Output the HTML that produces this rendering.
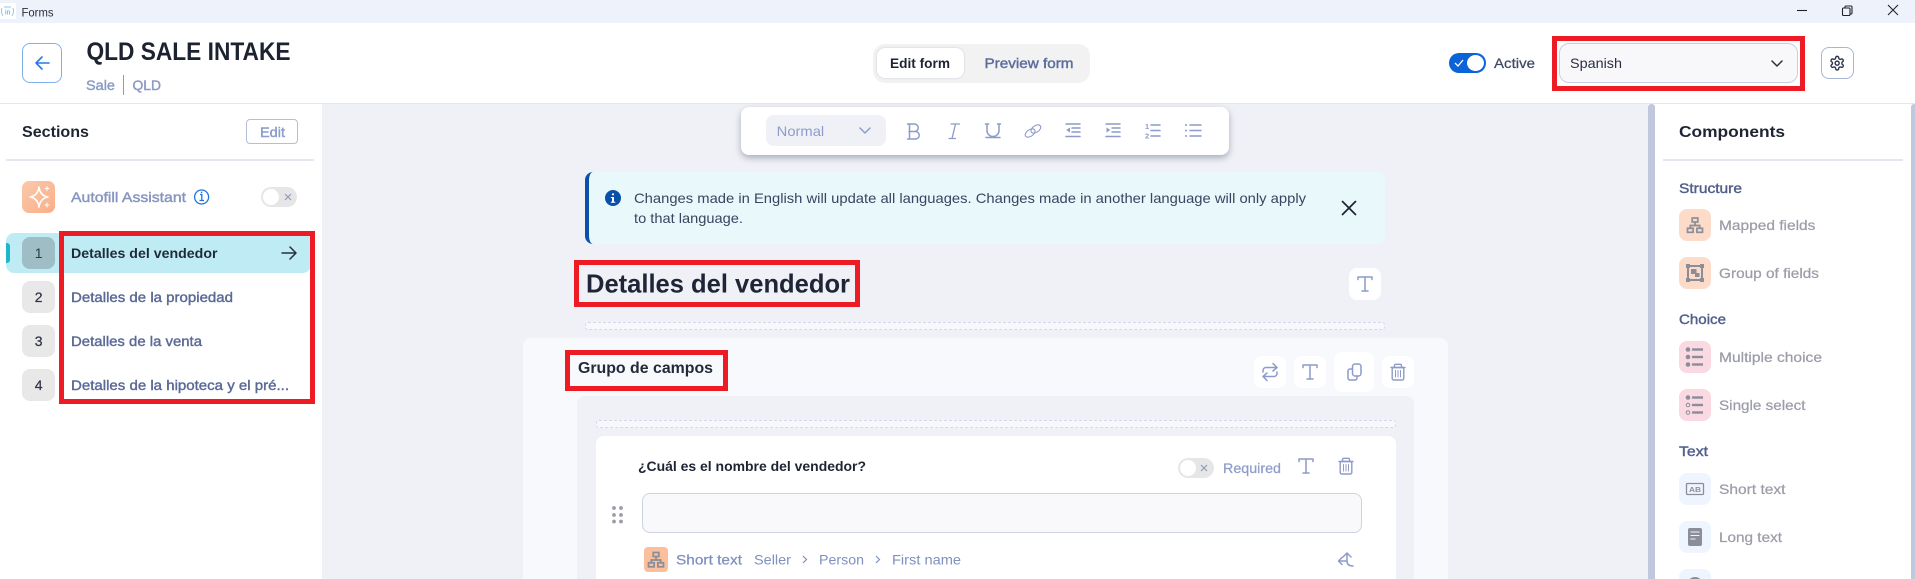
<!DOCTYPE html>
<html lang="en">
<head>
<meta charset="utf-8">
<title>Forms</title>
<style>
html,body{margin:0;padding:0;width:1915px;height:579px;overflow:hidden;background:#fff;font-family:"Liberation Sans",sans-serif}
#root{position:relative;width:1915px;height:579px;overflow:hidden}
.b{position:absolute;box-sizing:border-box}
svg{position:absolute;left:0;top:0}
text{font-family:"Liberation Sans",sans-serif;font-size:14px}
.m{stroke:currentColor;stroke-width:.25px}
.h{stroke:currentColor;stroke-width:.42px}
.s{font-weight:700}
.ic{fill:none;stroke:#8c9bc9;stroke-width:1.5;stroke-linecap:round;stroke-linejoin:round}
.gr{fill:none;stroke:#8b8d98;stroke-width:2}
</style>
</head>
<body>
<div id="root">
<!-- title bar / header -->
<div class="b" style="left:0;top:0;width:1915px;height:23px;background:#eef2fa"></div>
<div class="b" style="left:0;top:3px;width:16px;height:16px;background:#fff"></div>
<div class="b" style="left:0;top:23px;width:1915px;height:81px;background:#fff;border-bottom:1px solid #e4e7f0"></div>
<div class="b" style="left:22px;top:43px;width:40px;height:40px;border:1px solid #7fb0ee;border-radius:8px"></div>
<div class="b" style="left:123px;top:75px;width:1px;height:20px;background:#8a9ac5"></div>
<div class="b" style="left:873px;top:44px;width:217px;height:39px;background:#f2f2f3;border-radius:12px"></div>
<div class="b" style="left:877px;top:48px;width:87px;height:30px;background:#fff;border-radius:8px;box-shadow:0 0 2px rgba(40,50,80,.2)"></div>
<div class="b" style="left:1449px;top:53px;width:37px;height:20px;background:#0b63d8;border-radius:10px"></div>
<div class="b" style="left:1467px;top:55px;width:17px;height:16px;background:#fff;border-radius:50%"></div>
<div class="b" style="left:1559px;top:43px;width:239px;height:40px;background:#f8f8fb;border:1px solid #c8cfe2;border-radius:10px"></div>
<div class="b" style="left:1821px;top:47px;width:33px;height:32px;border:1px solid #a7b5d6;border-radius:8px"></div>

<!-- left sidebar -->
<div class="b" style="left:0;top:104px;width:322px;height:475px;background:#fff"></div>
<div class="b" style="left:246px;top:119px;width:52px;height:25px;border:1px solid #b5bed8;border-radius:4px"></div>
<div class="b" style="left:6px;top:159px;width:308px;height:2px;background:#e4e7f0"></div>
<div class="b" style="left:22px;top:181px;width:33px;height:32px;border-radius:7px;background:linear-gradient(135deg,#fbc9aa,#f9ae88)"></div>
<div class="b" style="left:261px;top:187px;width:36px;height:20px;border-radius:10px;background:#e6e6e6"></div>
<div class="b" style="left:263px;top:189px;width:16px;height:16px;border-radius:50%;background:#fff"></div>
<div class="b" style="left:6px;top:233px;width:305px;height:40px;background:#bfecf4;border-radius:8px"></div>
<div class="b" style="left:6px;top:243px;width:4px;height:20px;background:#1fb6cc;border-radius:0 3px 3px 0"></div>
<div class="b" style="left:22px;top:237px;width:33px;height:32px;background:#9ebdc4;border-radius:8px"></div>
<div class="b" style="left:22px;top:281px;width:33px;height:32px;background:#e8e8e8;border-radius:8px"></div>
<div class="b" style="left:22px;top:325px;width:33px;height:32px;background:#e8e8e8;border-radius:8px"></div>
<div class="b" style="left:22px;top:369px;width:33px;height:32px;background:#e8e8e8;border-radius:8px"></div>

<!-- centre -->
<div class="b" style="left:322px;top:104px;width:1326px;height:475px;background:#eff1f6"></div>
<div class="b" style="left:741px;top:107px;width:488px;height:48px;background:#fff;border-radius:8px;box-shadow:0 3px 7px rgba(40,50,80,.35)"></div>
<div class="b" style="left:766px;top:115px;width:120px;height:31px;background:#f0f1f7;border-radius:8px"></div>
<div class="b" style="left:585px;top:172px;width:800px;height:72px;background:#e9f8fb;border-left:4px solid #0a4fa8;border-radius:8px"></div>
<div class="b" style="left:1349px;top:268px;width:32px;height:32px;background:#fff;border-radius:8px"></div>
<div class="b" style="left:585px;top:322px;width:800px;height:8px;background:#f7f8fb;border:1px dashed #d3d8ea;border-radius:3px"></div>
<div class="b" style="left:523px;top:338px;width:925px;height:241px;background:#f8f9fc;border-radius:8px 8px 0 0"></div>
<div class="b" style="left:1254px;top:356px;width:32px;height:32px;background:#fff;border-radius:8px"></div>
<div class="b" style="left:1294px;top:356px;width:32px;height:32px;background:#fff;border-radius:8px"></div>
<div class="b" style="left:1334px;top:352px;width:40px;height:40px;background:#fff;border-radius:8px"></div>
<div class="b" style="left:1382px;top:356px;width:32px;height:32px;background:#fff;border-radius:8px"></div>
<div class="b" style="left:577px;top:396px;width:837px;height:183px;background:#eff1f6;border-radius:8px 8px 0 0"></div>
<div class="b" style="left:596px;top:420px;width:800px;height:8px;background:#f7f8fb;border:1px dashed #d3d8ea;border-radius:3px"></div>
<div class="b" style="left:596px;top:436px;width:800px;height:143px;background:#fff;border-radius:8px 8px 0 0"></div>
<div class="b" style="left:1178px;top:458px;width:36px;height:20px;border-radius:10px;background:#e6e6e6"></div>
<div class="b" style="left:1180px;top:460px;width:16px;height:16px;border-radius:50%;background:#fff"></div>
<div class="b" style="left:642px;top:493px;width:720px;height:40px;background:#f9f9fc;border:1px solid #cdd3e5;border-radius:8px"></div>
<div class="b" style="left:644px;top:547px;width:24px;height:25px;background:#fbbf9c;border-radius:4px"></div>

<!-- right panel -->
<div class="b" style="left:1648px;top:104px;width:7px;height:475px;background:#bfc8dc;border-radius:3px 3px 0 0"></div>
<div class="b" style="left:1655px;top:104px;width:256px;height:475px;background:#fff"></div>
<div class="b" style="left:1911px;top:104px;width:4px;height:475px;background:#bfc8dc;border-radius:3px 0 0 0"></div>
<div class="b" style="left:1663px;top:159px;width:240px;height:2px;background:#e4e7f0"></div>
<div class="b" style="left:1679px;top:209px;width:32px;height:32px;background:#fcdcc9;border-radius:8px"></div>
<div class="b" style="left:1679px;top:257px;width:32px;height:32px;background:#fcdcc9;border-radius:8px"></div>
<div class="b" style="left:1679px;top:341px;width:32px;height:32px;background:#fbd9e2;border-radius:8px"></div>
<div class="b" style="left:1679px;top:389px;width:32px;height:32px;background:#fbd9e2;border-radius:8px"></div>
<div class="b" style="left:1679px;top:473px;width:32px;height:32px;background:#eff5fe;border-radius:8px"></div>
<div class="b" style="left:1679px;top:521px;width:32px;height:32px;background:#eff5fe;border-radius:8px"></div>
<div class="b" style="left:1679px;top:569px;width:32px;height:10px;background:#eff5fe;border-radius:8px 8px 0 0"></div>

<!-- red annotation boxes -->
<div class="b" style="left:59px;top:231px;width:256px;height:173px;border:5px solid #ed1c24"></div>
<div class="b" style="left:1552px;top:36px;width:253px;height:55px;border:5px solid #ed1c24"></div>
<div class="b" style="left:574px;top:260px;width:286px;height:47px;border:5px solid #ed1c24"></div>
<div class="b" style="left:565px;top:350px;width:163px;height:41px;border:5px solid #ed1c24"></div>

<svg width="1915" height="579" viewBox="0 0 1915 579" xmlns="http://www.w3.org/2000/svg">
<!-- logo -->
<g fill="none" stroke="#8cc8ee" stroke-width="1">
<path d="M2 8q-1.500 4 1 8M13 8q1.500 4-1 8M4 7h7"/>
</g>
<text x="5" y="14.500" style="font-size:7px" fill="#4a9bd8">in</text>
<!-- window controls -->
<g fill="none" stroke="#1f2433" stroke-width="1.100">
<path d="M1797 10.500h10"/>
<rect x="1842.500" y="8" width="7.500" height="7.500" rx="1"/>
<path d="M1845 8v-1a1 1 0 0 1 1-1h5a1 1 0 0 1 1 1v6a1 1 0 0 1-1 1h-1"/>
<path d="M1888 5l10 10M1898 5l-10 10"/>
</g>
<text x="21.500" y="16.500" textLength="32" lengthAdjust="spacingAndGlyphs" style="font-size:12px" fill="#2a2f40">Forms</text>

<!-- header -->
<path d="M49 63H36M42 57l-6 6 6 6" fill="none" stroke="#2a78e4" stroke-width="1.600" stroke-linecap="round" stroke-linejoin="round"/>
<text x="86.500" y="60" textLength="204" lengthAdjust="spacingAndGlyphs" class="s" style="font-size:25px" fill="#1c2230">QLD SALE INTAKE</text>
<text x="86" y="90" textLength="29" lengthAdjust="spacingAndGlyphs" class="h" color="#8a9ac5" fill="#8a9ac5">Sale</text>
<text x="132.500" y="90" textLength="28.500" lengthAdjust="spacingAndGlyphs" class="h" color="#8a9ac5" fill="#8a9ac5">QLD</text>
<text x="890" y="68" textLength="60" lengthAdjust="spacingAndGlyphs" class="s" fill="#1f2433">Edit form</text>
<text x="984.500" y="68" textLength="89" lengthAdjust="spacingAndGlyphs" class="h" color="#5b6d9c" fill="#5b6d9c">Preview form</text>
<path d="M1455 63l3 3 5-6" fill="none" stroke="#fff" stroke-width="1.300"/>
<text x="1494" y="68" textLength="41" lengthAdjust="spacingAndGlyphs" fill="#3f4865" class="m" color="#3f4865">Active</text>
<text x="1570" y="68" textLength="52" lengthAdjust="spacingAndGlyphs" fill="#2a3040">Spanish</text>
<path d="M1772 61l5 5 5-5" fill="none" stroke="#2a3040" stroke-width="1.500" stroke-linecap="round" stroke-linejoin="round"/>
<g transform="translate(1829 55) scale(.68)" fill="none" stroke="#2f3650" stroke-width="2.100" stroke-linecap="round" stroke-linejoin="round">
<path d="M12.220 2h-.44a2 2 0 0 0-2 2v.18a2 2 0 0 1-1 1.730l-.43.25a2 2 0 0 1-2 0l-.15-.08a2 2 0 0 0-2.730.73l-.22.38a2 2 0 0 0 .73 2.730l.15.1a2 2 0 0 1 1 1.720v.51a2 2 0 0 1-1 1.740l-.15.09a2 2 0 0 0-.73 2.730l.22.38a2 2 0 0 0 2.730.73l.15-.08a2 2 0 0 1 2 0l.43.25a2 2 0 0 1 1 1.730V20a2 2 0 0 0 2 2h.44a2 2 0 0 0 2-2v-.18a2 2 0 0 1 1-1.730l.43-.25a2 2 0 0 1 2 0l.15.08a2 2 0 0 0 2.730-.73l.22-.39a2 2 0 0 0-.73-2.730l-.15-.08a2 2 0 0 1-1-1.740v-.5a2 2 0 0 1 1-1.740l.15-.09a2 2 0 0 0 .73-2.730l-.22-.38a2 2 0 0 0-2.730-.73l-.15.08a2 2 0 0 1-2 0l-.43-.25a2 2 0 0 1-1-1.730V4a2 2 0 0 0-2-2z"/>
<circle cx="12" cy="12" r="3"/>
</g>

<!-- sidebar -->
<text x="22" y="137" textLength="67" lengthAdjust="spacingAndGlyphs" class="s" style="font-size:16px" fill="#1f2433">Sections</text>
<text x="260" y="137" textLength="25" lengthAdjust="spacingAndGlyphs" class="h" color="#8d9ccb" fill="#8d9ccb">Edit</text>
<path d="M39 187q1.200 8.800 9 10q-7.800 1.200-9 10q-1.200-8.800-9-10q7.800-1.200 9-10z" fill="none" stroke="#fff" stroke-width="1.600" stroke-linejoin="round"/>
<path d="M47 186.500v4M45 188.500h4M47 203v4M45 205h4" stroke="#fff" stroke-width="1.100" stroke-linecap="round"/>
<text x="71" y="202" textLength="115" lengthAdjust="spacingAndGlyphs" class="h" color="#8795bf" fill="#8795bf">Autofill Assistant</text>
<circle cx="201.600" cy="197" r="7" fill="none" stroke="#1f74dd" stroke-width="1.300"/>
<path d="M200 194.500h1.800v5.500M199.500 200.500h4.500" fill="none" stroke="#1f74dd" stroke-width="1.300"/>
<circle cx="201.600" cy="192.300" r=".8" fill="#1f74dd"/>
<path d="M285 194l6 6M291 194l-6 6" stroke="#8f9bbd" stroke-width="1.200"/>
<text x="38.600" y="258" text-anchor="middle" fill="#2f3b4a">1</text>
<text x="38.600" y="302" text-anchor="middle" fill="#2f3446" class="m" color="#2f3446">2</text>
<text x="38.600" y="346" text-anchor="middle" fill="#2f3446" class="m" color="#2f3446">3</text>
<text x="38.600" y="390" text-anchor="middle" fill="#2f3446" class="m" color="#2f3446">4</text>
<text x="71" y="258" textLength="146.500" lengthAdjust="spacingAndGlyphs" class="s" fill="#1f2a3a">Detalles del vendedor</text>
<path d="M282 253H296M290 247l6 6-6 6" fill="none" stroke="#2a2f40" stroke-width="1.500" stroke-linecap="round" stroke-linejoin="round"/>
<text x="71" y="302" textLength="162" lengthAdjust="spacingAndGlyphs" class="m" color="#5a6a96" fill="#5a6a96" style="stroke-width:.4px">Detalles de la propiedad</text>
<text x="71" y="346" textLength="131" lengthAdjust="spacingAndGlyphs" class="m" color="#5a6a96" fill="#5a6a96" style="stroke-width:.4px">Detalles de la venta</text>
<text x="71" y="390" textLength="218" lengthAdjust="spacingAndGlyphs" class="m" color="#5a6a96" fill="#5a6a96" style="stroke-width:.4px">Detalles de la hipoteca y el pré...</text>

<!-- toolbar -->
<text x="776.700" y="136" textLength="47.500" lengthAdjust="spacingAndGlyphs" fill="#8d9ccb">Normal</text>
<path d="M860 128l5 5 5-5" fill="none" stroke="#8d9ccb" stroke-width="1.500" stroke-linecap="round" stroke-linejoin="round"/>
<g class="ic">
<path d="M909 124h5.500a3.700 3.700 0 0 1 0 7.500h-5.500M909 131.500h6.500a3.700 3.700 0 0 1 0 7.500h-6.500M909.500 124v15M907.500 124h2M907.500 139h2"/>
<path d="M951 124h8.500M949 138.500h6.500M955.500 124l-3.500 14.500" stroke-width="1.300"/>
<path d="M987 124v6.500a6 6 0 0 0 12 0V124M986 137.500h14M985.500 124h3M997.500 124h3"/>
<g transform="rotate(-35 1033 131)" stroke-width="1.100"><ellipse cx="1029.500" cy="131" rx="5.500" ry="3.300"/><ellipse cx="1036.500" cy="131" rx="5.500" ry="3.300"/></g>
<path d="M1066 124h14M1072 128h8M1072 132h8M1066 136.500h14"/>
<path d="M1106 124h14M1112 128h8M1112 132h8M1106 136.500h14"/>
<path d="M1151 125h9M1151 130.500h9M1151 136h9"/>
<path d="M1190 125h11M1190 130.500h11M1190 136h11"/>
</g>
<path d="M1070 127.500v5l-3.800-2.500zM1106.500 127.500v5l3.800-2.500z" fill="#8c9bc9"/>
<text x="1145" y="129" style="font-size:7.500px" font-weight="700" fill="#8c9bc9">1</text>
<text x="1145" y="138.500" style="font-size:7.500px" font-weight="700" fill="#8c9bc9">2</text>
<g fill="#8c9bc9"><circle cx="1186" cy="125" r="1"/><circle cx="1186" cy="130.500" r="1"/><circle cx="1186" cy="136" r="1"/></g>

<!-- banner -->
<circle cx="613" cy="198" r="8" fill="#0a4fa8"/>
<rect x="612" y="197" width="2" height="5.500" fill="#fff"/><rect x="610.800" y="197" width="2" height="1" fill="#fff"/><rect x="610.800" y="201.800" width="4.500" height="1" fill="#fff"/>
<circle cx="613" cy="194.300" r="1.100" fill="#fff"/>
<text x="634" y="203" textLength="672" lengthAdjust="spacingAndGlyphs" fill="#3b4460">Changes made in English will update all languages. Changes made in another language will only apply</text>
<text x="634" y="223" textLength="109" lengthAdjust="spacingAndGlyphs" fill="#3b4460">to that language.</text>
<path d="M1342.500 201.500l13 13M1355.500 201.500l-13 13" stroke="#1c2230" stroke-width="1.700" stroke-linecap="round"/>

<!-- heading -->
<text x="586" y="292.500" textLength="264" lengthAdjust="spacingAndGlyphs" class="s" style="font-size:26px" fill="#1f2536">Detalles del vendedor</text>
<defs>
<g id="t" fill="none" stroke="#8c9bc9" stroke-width="1.500" stroke-linecap="round" stroke-linejoin="round"><path d="M-7 -4.500V-7H7V-4.500M0 -7V7M-3 7H3"/></g>
<g id="tr" fill="none" stroke="#8c9bc9" stroke-width="1.400" stroke-linecap="round" stroke-linejoin="round"><rect x="-5.800" y="-4.500" width="11.600" height="12.500" rx="1.500"/><path d="M-7 -4.500H7M-3.500 -4.500V-6.500a1.200 1.200 0 0 1 1.200-1.200h4.600a1.200 1.200 0 0 1 1.200 1.200V-4.500"/><path d="M-2.500 -1.500V5M0 -1.500V5M2.500 -1.500V5" stroke-width="1"/></g>
<g id="net" fill="none" stroke="#8b8d98" stroke-width="1.700"><rect x="-2.800" y="-7" width="5.600" height="4"/><rect x="-7.500" y="3.300" width="5.600" height="4"/><rect x="1.900" y="3.300" width="5.600" height="4"/><path d="M0 -3V0M-4.700 3.300V.5H4.700V3.300"/></g>
</defs>
<use href="#t" x="1365" y="284"/>
<text x="578" y="373" textLength="135" lengthAdjust="spacingAndGlyphs" class="s" style="font-size:16px" fill="#222a3a">Grupo de campos</text>
<g class="ic">
<path d="M1263 372v-1.500a3 3 0 0 1 3-3h11M1273 363.500l4 4-4 3.500M1277 372v1.500a3 3 0 0 1-3 3h-11M1267 380.500l-4-4 4-3.500"/>
</g>
<use href="#t" x="1310" y="372"/>
<g class="ic" stroke-width="1.300">
<rect x="1352.500" y="364" width="8.500" height="12" rx="2.500"/>
<path d="M1352 369h-2a2 2 0 0 0-2 2v7a2 2 0 0 0 2 2h5a2 2 0 0 0 2-2v-2"/>
</g>
<use href="#tr" x="1398" y="372"/>

<!-- field -->
<text x="638" y="471" textLength="228" lengthAdjust="spacingAndGlyphs" class="s" fill="#1f2433">¿Cuál es el nombre del vendedor?</text>
<path d="M1201 465l6 6M1207 465l-6 6" stroke="#8f9bbd" stroke-width="1.200"/>
<text x="1223" y="473" textLength="58" lengthAdjust="spacingAndGlyphs" fill="#8d9ccb" class="m" color="#8d9ccb">Required</text>
<use href="#t" x="1306" y="466"/>
<use href="#tr" x="1346" y="466"/>
<g fill="#9a9ca8"><circle cx="614" cy="508" r="1.900"/><circle cx="621" cy="508" r="1.900"/><circle cx="614" cy="515" r="1.900"/><circle cx="621" cy="515" r="1.900"/><circle cx="614" cy="521.500" r="1.900"/><circle cx="621" cy="521.500" r="1.900"/></g>
<use href="#net" x="656" y="559.500"/>
<text x="676" y="564.500" textLength="66" lengthAdjust="spacingAndGlyphs" fill="#7f90c0" class="m" color="#7f90c0">Short text</text>
<text x="754" y="564.500" textLength="37" lengthAdjust="spacingAndGlyphs" fill="#7f90c0">Seller</text>
<path d="M803 556l3.500 3.500-3.500 3.500M876 556l3.500 3.500-3.500 3.500" fill="none" stroke="#7f90c0" stroke-width="1.200"/>
<text x="819" y="564.500" textLength="45" lengthAdjust="spacingAndGlyphs" fill="#7f90c0">Person</text>
<text x="892" y="564.500" textLength="69" lengthAdjust="spacingAndGlyphs" fill="#7f90c0">First name</text>
<g class="ic"><path d="M1347 553v8q0 5 6 5M1343 557l4-4 4 4M1347 561h-8M1342 557.500l-3.500 3.500 3.500 3.500"/></g>

<!-- components -->
<text x="1679" y="137" textLength="106" lengthAdjust="spacingAndGlyphs" class="s" style="font-size:16px" fill="#1f2433">Components</text>
<text x="1679" y="193" textLength="63" lengthAdjust="spacingAndGlyphs" class="h" color="#515f8d" fill="#515f8d">Structure</text>
<text x="1679" y="324" textLength="47" lengthAdjust="spacingAndGlyphs" class="h" color="#515f8d" fill="#515f8d">Choice</text>
<text x="1679" y="456" textLength="29" lengthAdjust="spacingAndGlyphs" class="h" color="#515f8d" fill="#515f8d">Text</text>
<g fill="#9b9da8" class="m" color="#9b9da8">
<text x="1719" y="230" textLength="96.400" lengthAdjust="spacingAndGlyphs">Mapped fields</text>
<text x="1719" y="278" textLength="100" lengthAdjust="spacingAndGlyphs">Group of fields</text>
<text x="1719" y="362" textLength="103" lengthAdjust="spacingAndGlyphs">Multiple choice</text>
<text x="1719" y="410" textLength="86.500" lengthAdjust="spacingAndGlyphs">Single select</text>
<text x="1719" y="494" textLength="66.500" lengthAdjust="spacingAndGlyphs">Short text</text>
<text x="1719" y="542" textLength="63" lengthAdjust="spacingAndGlyphs">Long text</text>
</g>
<use href="#net" x="1695" y="225"/>
<g class="gr">
<rect x="1688" y="266" width="14" height="14"/>
</g>
<g fill="#8b8d98">
<rect x="1686" y="264" width="4" height="4"/><rect x="1700" y="264" width="4" height="4"/><rect x="1686" y="278" width="4" height="4"/><rect x="1700" y="278" width="4" height="4"/>
<rect x="1691" y="269" width="5.500" height="5"/><rect x="1695" y="273" width="4.500" height="4"/>
</g>
<g fill="#8b8d98">
<circle cx="1688" cy="349.500" r="2.300"/><circle cx="1688" cy="357" r="2.300"/><circle cx="1688" cy="364.500" r="2.300"/>
<rect x="1692" y="348.300" width="11" height="2.400"/><rect x="1692" y="355.800" width="11" height="2.400"/><rect x="1692" y="363.300" width="11" height="2.400"/>
<circle cx="1688" cy="397.500" r="2.300"/>
<rect x="1692" y="396.300" width="11" height="2.400"/><rect x="1692" y="403.800" width="11" height="2.400"/><rect x="1692" y="411.300" width="11" height="2.400"/>
</g>
<circle cx="1688" cy="405" r="1.800" fill="none" stroke="#8b8d98"/><circle cx="1688" cy="412.500" r="1.800" fill="none" stroke="#8b8d98"/>
<rect x="1686.500" y="483.500" width="17" height="11" rx="1" fill="none" stroke="#8b8d98" stroke-width="1.300"/>
<text x="1689" y="492" textLength="12" lengthAdjust="spacingAndGlyphs" style="font-size:7px" font-weight="700" fill="#8b8d98">AB</text>
<rect x="1688" y="528" width="14" height="18" rx="2" fill="#8b8d98"/>
<path d="M1690.500 532h9M1690.500 535.500h9M1690.500 539h5" stroke="#eff5fe" stroke-width="1.100"/>
<circle cx="1695" cy="585" r="8" fill="#8b8d98"/>
</svg>
</div>
</body>
</html>
